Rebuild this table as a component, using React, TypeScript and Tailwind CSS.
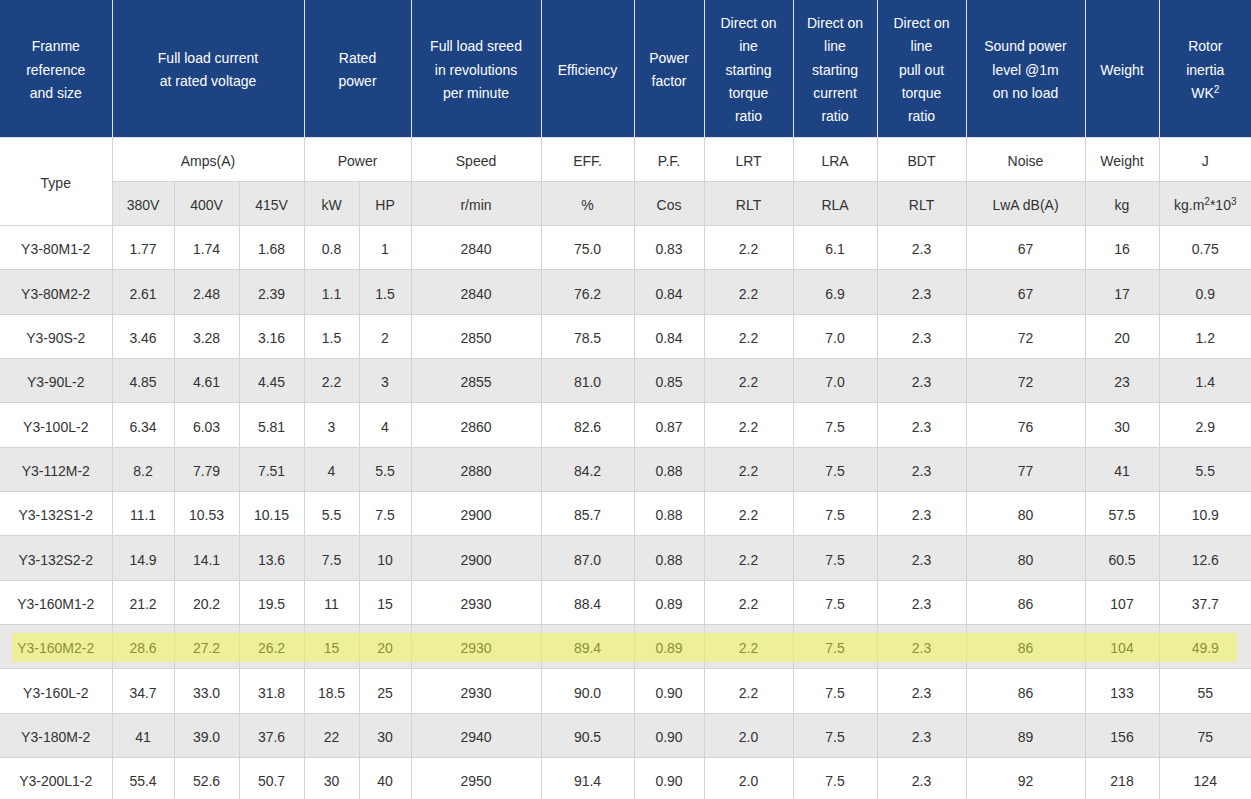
import React from "react";

const widths = [112, 62, 65, 65, 55, 52, 130, 93, 70, 89, 84, 89, 119, 74, 92];

const rows: string[][] = [
  ["Y3-80M1-2", "1.77", "1.74", "1.68", "0.8", "1", "2840", "75.0", "0.83", "2.2", "6.1", "2.3", "67", "16", "0.75"],
  ["Y3-80M2-2", "2.61", "2.48", "2.39", "1.1", "1.5", "2840", "76.2", "0.84", "2.2", "6.9", "2.3", "67", "17", "0.9"],
  ["Y3-90S-2", "3.46", "3.28", "3.16", "1.5", "2", "2850", "78.5", "0.84", "2.2", "7.0", "2.3", "72", "20", "1.2"],
  ["Y3-90L-2", "4.85", "4.61", "4.45", "2.2", "3", "2855", "81.0", "0.85", "2.2", "7.0", "2.3", "72", "23", "1.4"],
  ["Y3-100L-2", "6.34", "6.03", "5.81", "3", "4", "2860", "82.6", "0.87", "2.2", "7.5", "2.3", "76", "30", "2.9"],
  ["Y3-112M-2", "8.2", "7.79", "7.51", "4", "5.5", "2880", "84.2", "0.88", "2.2", "7.5", "2.3", "77", "41", "5.5"],
  ["Y3-132S1-2", "11.1", "10.53", "10.15", "5.5", "7.5", "2900", "85.7", "0.88", "2.2", "7.5", "2.3", "80", "57.5", "10.9"],
  ["Y3-132S2-2", "14.9", "14.1", "13.6", "7.5", "10", "2900", "87.0", "0.88", "2.2", "7.5", "2.3", "80", "60.5", "12.6"],
  ["Y3-160M1-2", "21.2", "20.2", "19.5", "11", "15", "2930", "88.4", "0.89", "2.2", "7.5", "2.3", "86", "107", "37.7"],
  ["Y3-160M2-2", "28.6", "27.2", "26.2", "15", "20", "2930", "89.4", "0.89", "2.2", "7.5", "2.3", "86", "104", "49.9"],
  ["Y3-160L-2", "34.7", "33.0", "31.8", "18.5", "25", "2930", "90.0", "0.90", "2.2", "7.5", "2.3", "86", "133", "55"],
  ["Y3-180M-2", "41", "39.0", "37.6", "22", "30", "2940", "90.5", "0.90", "2.0", "7.5", "2.3", "89", "156", "75"],
  ["Y3-200L1-2", "55.4", "52.6", "50.7", "30", "40", "2950", "91.4", "0.90", "2.0", "7.5", "2.3", "92", "218", "124"],
];

const th = "border border-[#dfe4ec] border-t-0 bg-[#1d4382] text-white font-normal text-center align-middle leading-[23.4px] px-0 pt-[4px] pb-0";
const td = "border border-[#d3d3d3] text-center align-middle px-0 pt-[4px] pb-0";

export default function App() {
  return (
    <div
      className="relative w-[1251px] bg-white text-[14px] text-[#333333]"
      style={{ fontFamily: '"Liberation Sans", Arial, sans-serif' }}
    >
      <table className="table-fixed border-collapse w-[1251px] border-l-0">
        <colgroup>
          {widths.map((w, i) => (
            <col key={i} style={{ width: w }} />
          ))}
        </colgroup>
        <thead>
          <tr className="h-[137px]">
            <th className={th + " border-l-0"}>Franme<br />reference<br />and size</th>
            <th className={th} colSpan={3}>Full load current<br />at rated voltage</th>
            <th className={th} colSpan={2}>Rated<br />power</th>
            <th className={th}>Full load sreed<br />in revolutions<br />per minute</th>
            <th className={th}>Efficiency</th>
            <th className={th}>Power<br />factor</th>
            <th className={th}>Direct on<br />ine<br />starting<br />torque<br />ratio</th>
            <th className={th}>Direct on<br />line<br />starting<br />current<br />ratio</th>
            <th className={th}>Direct on<br />line<br />pull out<br />torque<br />ratio</th>
            <th className={th}>Sound power<br />level @1m<br />on no load</th>
            <th className={th}>Weight</th>
            <th className={th + " border-r-0"}>Rotor<br />inertia<br />WK<sup className="text-[10px]">2</sup></th>
          </tr>
        </thead>
        <tbody>
          <tr className="h-[44.33px] bg-white">
            <td className={td + " border-l-0"} rowSpan={2}>Type</td>
            <td className={td} colSpan={3}>Amps(A)</td>
            <td className={td} colSpan={2}>Power</td>
            <td className={td}>Speed</td>
            <td className={td}>EFF.</td>
            <td className={td}>P.F.</td>
            <td className={td}>LRT</td>
            <td className={td}>LRA</td>
            <td className={td}>BDT</td>
            <td className={td}>Noise</td>
            <td className={td}>Weight</td>
            <td className={td + " border-r-0"}>J</td>
          </tr>
          <tr className="h-[44.33px] bg-[#e8e8e8]">
            <td className={td}>380V</td>
            <td className={td}>400V</td>
            <td className={td}>415V</td>
            <td className={td}>kW</td>
            <td className={td}>HP</td>
            <td className={td}>r/min</td>
            <td className={td}>%</td>
            <td className={td}>Cos</td>
            <td className={td}>RLT</td>
            <td className={td}>RLA</td>
            <td className={td}>RLT</td>
            <td className={td}>LwA dB(A)</td>
            <td className={td}>kg</td>
            <td className={td + " border-r-0"}>
              kg.m<sup className="text-[10px]">2</sup>*10<sup className="text-[10px]">3</sup>
            </td>
          </tr>
          {rows.map((r, i) => (
            <tr key={i} className={"h-[44.33px] " + (i % 2 === 1 ? "bg-[#e8e8e8]" : "bg-white")}>
              {r.map((c, j) => (
                <td
                  key={j}
                  className={td + (j === 0 ? " border-l-0" : "") + (j === r.length - 1 ? " border-r-0" : "")}
                >
                  {c}
                </td>
              ))}
            </tr>
          ))}
        </tbody>
      </table>
      <div className="pointer-events-none absolute left-[12px] top-[633px] h-[29px] w-[1225px] bg-[rgba(245,250,58,0.45)]" />
    </div>
  );
}
